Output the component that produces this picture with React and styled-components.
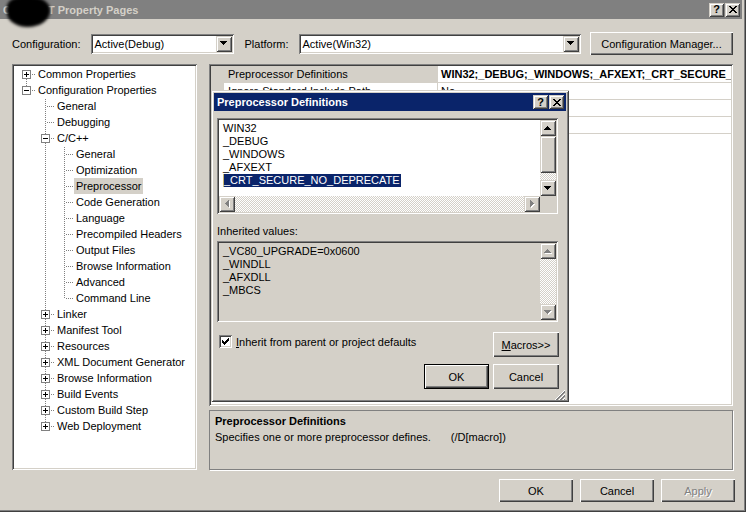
import React from 'react';
import styled, { createGlobalStyle, css } from 'styled-components';

const FACE = '#d4d0c8';
const SHADOW = '#808080';
const DARK = '#404040';
const NAVY = '#0a246a';

const GlobalStyle = createGlobalStyle`
  html, body { margin: 0; padding: 0; background: ${FACE}; }
  body {
    font-family: "Liberation Sans", Arial, sans-serif;
    font-size: 11px;
    color: #000;
  }
  * { box-sizing: border-box; }
`;

const raised = css`
  box-shadow: inset 1px 1px 0 #fff, inset -1px -1px 0 ${DARK}, inset -2px -2px 0 ${SHADOW};
`;

const scrollRaised = css`
  box-shadow: inset 1px 1px 0 ${FACE}, inset -1px -1px 0 ${DARK}, inset 2px 2px 0 #fff, inset -2px -2px 0 ${SHADOW};
`;

const sunken = css`
  box-shadow: inset 1px 1px 0 ${SHADOW}, inset -1px -1px 0 #fff, inset 2px 2px 0 ${DARK}, inset -2px -2px 0 ${FACE};
  padding: 2px;
`;

const dither = css`
  background: repeating-conic-gradient(#fff 0 25%, ${FACE} 0 50%) 0 0 / 2px 2px;
`;

const Window = styled.div`
  width: 746px;
  height: 512px;
  background: ${FACE};
  display: flex;
  flex-direction: column;
  padding: 0 4px 4px 0;
  box-shadow: inset -1px -1px 0 ${DARK}, inset -2px -2px 0 ${SHADOW};
  overflow: hidden;
  position: relative;
`;

const TitleBar = styled.div`
  position: relative;
  height: ${p => (p.$small ? 18 : 19)}px;
  flex: none;
  background: ${p => (p.$active ? NAVY : SHADOW)};
  color: ${p => (p.$active ? '#fff' : FACE)};
  display: flex;
  align-items: center;
  justify-content: space-between;
  padding: 0 2px 0 3px;
  font-weight: bold;
  white-space: nowrap;
`;

const TitleText = styled.span`
  display: flex;
  align-items: center;
`;

const Hidden = styled.span`
  display: inline-block;
  width: 37px;
`;

const Redaction = styled.span`
  position: absolute;
  left: 7px;
  top: -3px;
  width: 43px;
  height: 30px;
  background: #000;
  border-radius: 35% 45% 55% 50%;
  filter: blur(1.5px);
  z-index: 5;
`;

const CaptionButtons = styled.div`
  display: flex;
  gap: 1px;
`;

const CapBtn = styled.div`
  width: 15px;
  height: 14px;
  background: ${FACE};
  ${scrollRaised};
  display: flex;
  align-items: center;
  justify-content: center;
  color: #000;
  font-weight: bold;
  font-size: 11px;
  line-height: 1;
`;

const Content = styled.div`
  flex: 1;
  min-width: 0;
  display: flex;
  flex-direction: column;
  padding: 13px 9px 0 12px;
`;

const ConfigRow = styled.div`
  display: flex;
  align-items: center;
  height: 23px;
  flex: none;
`;

const FieldLabel = styled.span`
  margin: 0 ${p => p.$right}px 0 ${p => p.$left || 0}px;
  white-space: nowrap;
`;

const Combo = styled.div`
  width: ${p => p.$w}px;
  height: 20px;
  flex: none;
  background: #fff;
  ${sunken};
  display: flex;
  align-items: center;
  justify-content: space-between;
`;

const ComboText = styled.span`
  padding-left: 2px;
  white-space: nowrap;
`;

const ArrowBtn = styled.div`
  width: 16px;
  height: ${p => p.$h || 16}px;
  flex: none;
  background: ${FACE};
  ${scrollRaised};
  display: flex;
  align-items: center;
  justify-content: center;
`;

const PushButton = styled.div`
  width: ${p => p.$w}px;
  height: ${p => p.$h || 23}px;
  flex: none;
  background: ${FACE};
  ${raised};
  border: ${p => (p.$default ? '1px solid #000' : 'none')};
  display: flex;
  align-items: center;
  justify-content: center;
  white-space: nowrap;
  margin-left: ${p => (p.$auto ? 'auto' : '0')};
  color: ${p => (p.$disabled ? SHADOW : '#000')};
  text-shadow: ${p => (p.$disabled ? '1px 1px 0 #fff' : 'none')};
`;

const Main = styled.div`
  display: flex;
  gap: 12px;
  margin-top: 9px;
  height: 406px;
  flex: none;
`;

const TreePanel = styled.div`
  width: 185px;
  flex: none;
  overflow: hidden;
  background: #fff;
  ${sunken};
  padding: 2px 0 0 5px;
`;

const TreeRow = styled.div`
  display: flex;
  align-items: center;
  height: 16px;
  white-space: nowrap;
`;

const TreeLabel = styled.span`
  padding: 0 2px;
  line-height: 16px;
  height: 16px;
  background: ${p => (p.$selected ? FACE : 'transparent')};
`;

const RightPane = styled.div`
  flex: 1;
  min-width: 0;
  display: flex;
  flex-direction: column;
  gap: 4px;
`;

const Grid = styled.div`
  position: relative;
  height: 342px;
  flex: none;
  background: #fff;
  ${sunken};
`;

const GridRow = styled.div`
  display: flex;
  height: 17px;
  border-bottom: 1px solid ${FACE};
`;

const Gutter = styled.div`
  width: 13px;
  flex: none;
  background: ${FACE};
`;

const NameCell = styled.div`
  width: 214px;
  flex: none;
  padding-left: 4px;
  line-height: 16px;
  white-space: nowrap;
  overflow: hidden;
  background: ${p => (p.$selected ? FACE : '#fff')};
  border-right: 1px solid ${FACE};
`;

const ValueCell = styled.div`
  flex: 1;
  min-width: 0;
  padding-left: 3px;
  line-height: 16px;
  white-space: nowrap;
  overflow: hidden;
  font-weight: ${p => (p.$bold ? 'bold' : 'normal')};
`;

const Description = styled.div`
  flex: 1;
  border: 1px solid ${SHADOW};
  box-shadow: 1px 1px 0 #fff;
  padding: 2px 5px;
  line-height: 16px;
`;

const DescTitle = styled.div`
  font-weight: bold;
`;

const Switch = styled.span`
  margin-left: 20px;
`;

const BottomRow = styled.div`
  display: flex;
  justify-content: flex-end;
  gap: 7px;
  margin-top: 9px;
  margin-right: -2px;
`;

/* ---------- dialog ---------- */

const Dialog = styled.div`
  position: absolute;
  left: 2px;
  top: 26px;
  width: 358px;
  height: 312px;
  background: ${FACE};
  padding: 3px;
  box-shadow: inset 1px 1px 0 ${FACE}, inset -1px -1px 0 ${DARK}, inset 2px 2px 0 #fff, inset -2px -2px 0 ${SHADOW};
  display: flex;
  flex-direction: column;
  z-index: 2;
`;

const DialogBody = styled.div`
  flex: 1;
  display: flex;
  flex-direction: column;
  padding: 7px 8px 0 3px;
`;

const ListBox = styled.div`
  height: ${p => p.$h}px;
  flex: none;
  ${sunken};
  background: ${p => (p.$disabled ? FACE : '#fff')};
  display: grid;
  grid-template-columns: 1fr 16px;
  grid-template-rows: ${p => (p.$hscroll ? '1fr 16px' : '1fr')};
  margin-top: ${p => p.$mt || 0}px;
`;

const ListItems = styled.div`
  padding: 2px 0 0 4px;
  overflow: hidden;
`;

const ListItem = styled.div`
  height: 13px;
  line-height: 13px;
  white-space: nowrap;
  ${p =>
    p.$selected &&
    css`
      display: inline-block;
      background: ${NAVY};
      color: #fff;
      border-left: 1px solid #c9b46e;
      padding-right: 1px;
    `}
`;

const VScroll = styled.div`
  display: flex;
  flex-direction: column;
  ${dither};
`;

const Track = styled.div`
  flex: 1;
`;

const Thumb = styled.div`
  height: ${p => p.$h}px;
  flex: none;
  background: ${FACE};
  ${scrollRaised};
`;

const HScroll = styled.div`
  display: flex;
  ${dither};
`;

const Corner = styled.div`
  background: ${FACE};
`;

const SectionLabel = styled.div`
  margin-top: 11px;
  line-height: 13px;
  height: 13px;
`;

const OptionsRow = styled.div`
  display: flex;
  justify-content: space-between;
  margin-top: 10px;
  margin-right: -1px;
`;

const CheckWrap = styled.label`
  display: flex;
  align-items: center;
  gap: 4px;
  margin: 3px 0 0 2px;
  height: 13px;
  align-self: flex-start;
`;

const CheckBox = styled.span`
  width: 13px;
  height: 13px;
  background: #fff;
  ${sunken};
  display: flex;
  align-items: center;
  justify-content: center;
`;

const ActionRow = styled.div`
  display: flex;
  justify-content: flex-end;
  gap: 4px;
  margin-top: 7px;
  margin-right: -1px;
`;

const GripRow = styled.div`
  flex: 1;
  display: flex;
  justify-content: flex-end;
  align-items: flex-end;
  margin-right: -8px;
`;

const Key = styled.span`
  text-decoration: underline;
`;

/* ---------- drawings ---------- */

const Arrow = ({ dir, disabled }) => {
  const rows = [[3, 1], [2, 3], [1, 5], [0, 7]];
  const vertical = dir === 'up' || dir === 'down';
  const pix = rows.map(([o, l], i) => {
    const r = dir === 'up' || dir === 'left' ? i : 3 - i;
    return vertical ? { x: o, y: r, w: l, h: 1 } : { x: r, y: o, w: 1, h: l };
  });
  const w = vertical ? 8 : 5;
  const h = vertical ? 5 : 8;
  return (
    <svg width={w} height={h} shapeRendering="crispEdges">
      {disabled &&
        pix.map((p, i) => <rect key={'s' + i} x={p.x + 1} y={p.y + 1} width={p.w} height={p.h} fill="#fff" />)}
      {pix.map((p, i) => (
        <rect key={i} x={p.x} y={p.y} width={p.w} height={p.h} fill={disabled ? SHADOW : '#000'} />
      ))}
    </svg>
  );
};

const CloseGlyph = () => (
  <svg width="8" height="7" shapeRendering="crispEdges">
    {[0, 1, 2, 3, 4, 5, 6].map(i => (
      <g key={i}>
        <rect x={i} y={i} width="2" height="1" fill="#000" />
        <rect x={6 - i} y={i} width="2" height="1" fill="#000" />
      </g>
    ))}
  </svg>
);

const CheckMark = () => {
  const tops = [2, 3, 4, 3, 2, 1, 0];
  return (
    <svg width="7" height="7" shapeRendering="crispEdges">
      {tops.map((t, i) => <rect key={i} x={i} y={t} width="1" height="3" fill="#000" />)}
    </svg>
  );
};

const Grip = () => (
  <svg width="12" height="12" shapeRendering="crispEdges">
    {[0, 4, 8].map(o => (
      <g key={o}>
        <line x1={11} y1={o + 1} x2={o + 1} y2={11} stroke="#fff" strokeWidth="1" />
        <line x1={11} y1={o + 2} x2={o + 2} y2={11} stroke={SHADOW} strokeWidth="1" />
        <line x1={11} y1={o + 3} x2={o + 3} y2={11} stroke={SHADOW} strokeWidth="1" />
      </g>
    ))}
  </svg>
);

const dots = (x1, y1, x2, y2) => {
  const out = [];
  if (x1 === x2) {
    for (let y = y1; y <= y2; y += 2) out.push(<rect key={`v${x1}-${y}`} x={x1} y={y} width="1" height="1" />);
  } else {
    for (let x = x1; x <= x2; x += 2) out.push(<rect key={`h${x}-${y1}`} x={x} y={y1} width="1" height="1" />);
  }
  return out;
};

const Guide = ({ line }) => (
  <svg width="19" height="16" shapeRendering="crispEdges" style={{ flex: 'none' }}>
    <g fill={SHADOW}>{line && dots(9, 1, 9, 15)}</g>
  </svg>
);

const Connector = ({ up, down, expander }) => (
  <svg width="19" height="16" shapeRendering="crispEdges" style={{ flex: 'none' }}>
    <g fill={SHADOW}>
      {up && dots(9, 1, 9, expander ? 3 : 7)}
      {down && dots(9, expander ? 13 : 9, 9, 15)}
      {dots(expander ? 15 : 11, 8, 17, 8)}
    </g>
    {expander && (
      <g>
        <rect x="5" y="4" width="8" height="8" fill="#fff" stroke={SHADOW} strokeWidth="1" transform="translate(0.5 0.5)" />
        <rect x="7" y="8" width="5" height="1" fill="#000" />
        {expander === 'plus' && <rect x="9" y="6" width="1" height="5" fill="#000" />}
      </g>
    )}
  </svg>
);

/* ---------- data ---------- */

const leaf = label => ({ label });
const closed = label => ({ label, children: [] });

const tree = [
  closed('Common Properties'),
  {
    label: 'Configuration Properties',
    open: true,
    children: [
      leaf('General'),
      leaf('Debugging'),
      {
        label: 'C/C++',
        open: true,
        children: [
          leaf('General'),
          leaf('Optimization'),
          { label: 'Preprocessor', selected: true },
          leaf('Code Generation'),
          leaf('Language'),
          leaf('Precompiled Headers'),
          leaf('Output Files'),
          leaf('Browse Information'),
          leaf('Advanced'),
          leaf('Command Line'),
        ],
      },
      closed('Linker'),
      closed('Manifest Tool'),
      closed('Resources'),
      closed('XML Document Generator'),
      closed('Browse Information'),
      closed('Build Events'),
      closed('Custom Build Step'),
      closed('Web Deployment'),
    ],
  },
];

function flatten(nodes, guides = [], out = []) {
  nodes.forEach((n, i) => {
    const last = i === nodes.length - 1;
    out.push({
      label: n.label,
      guides,
      up: !(guides.length === 0 && i === 0),
      down: !last,
      expander: n.children ? (n.open ? 'minus' : 'plus') : null,
      selected: n.selected,
    });
    if (n.open) flatten(n.children, [...guides, !last], out);
  });
  return out;
}

const rows = flatten(tree);

const properties = [
  { name: 'Preprocessor Definitions', value: 'WIN32;_DEBUG;_WINDOWS;_AFXEXT;_CRT_SECURE_NO_DEPRECATE', selected: true },
  { name: 'Ignore Standard Include Path', value: 'No' },
  { name: 'Generate Preprocessed File', value: 'No' },
  { name: 'Keep Comments', value: 'No' },
];

const definitions = ['WIN32', '_DEBUG', '_WINDOWS', '_AFXEXT', '_CRT_SECURE_NO_DEPRECATE'];
const inherited = ['_VC80_UPGRADE=0x0600', '_WINDLL', '_AFXDLL', '_MBCS'];

/* ---------- app ---------- */

export default function App() {
  return (
    <>
      <GlobalStyle />
      <Window>
        <TitleBar>
          <TitleText>
            C<Hidden />T Property Pages
          </TitleText>
          <Redaction />
          <CaptionButtons>
            <CapBtn>?</CapBtn>
            <CapBtn><CloseGlyph /></CapBtn>
          </CaptionButtons>
        </TitleBar>

        <Content>
          <ConfigRow>
            <FieldLabel $right={10}>Configuration:</FieldLabel>
            <Combo $w={143}>
              <ComboText>Active(Debug)</ComboText>
              <ArrowBtn><Arrow dir="down" /></ArrowBtn>
            </Combo>
            <FieldLabel $left={11} $right={10}>Platform:</FieldLabel>
            <Combo $w={282}>
              <ComboText>Active(Win32)</ComboText>
              <ArrowBtn><Arrow dir="down" /></ArrowBtn>
            </Combo>
            <PushButton $w={143} $auto>Configuration Manager...</PushButton>
          </ConfigRow>

          <Main>
            <TreePanel>
              {rows.map((r, i) => (
                <TreeRow key={i}>
                  {r.guides.map((g, j) => <Guide key={j} line={g} />)}
                  <Connector up={r.up} down={r.down} expander={r.expander} />
                  <TreeLabel $selected={r.selected}>{r.label}</TreeLabel>
                </TreeRow>
              ))}
            </TreePanel>

            <RightPane>
              <Grid>
                {properties.map(p => (
                  <GridRow key={p.name}>
                    <Gutter />
                    <NameCell $selected={p.selected}>{p.name}</NameCell>
                    <ValueCell $bold={p.selected}>{p.value}</ValueCell>
                  </GridRow>
                ))}

                <Dialog>
                  <TitleBar $active $small>
                    <TitleText>Preprocessor Definitions</TitleText>
                    <CaptionButtons>
                      <CapBtn>?</CapBtn>
                      <CapBtn><CloseGlyph /></CapBtn>
                    </CaptionButtons>
                  </TitleBar>
                  <DialogBody>
                    <ListBox $h={96} $hscroll>
                      <ListItems>
                        {definitions.map((d, i) => (
                          <div key={d}>
                            <ListItem $selected={i === definitions.length - 1}>{d}</ListItem>
                          </div>
                        ))}
                      </ListItems>
                      <VScroll>
                        <ArrowBtn><Arrow dir="up" /></ArrowBtn>
                        <Thumb $h={37} />
                        <Track />
                        <ArrowBtn><Arrow dir="down" /></ArrowBtn>
                      </VScroll>
                      <HScroll>
                        <ArrowBtn><Arrow dir="left" disabled /></ArrowBtn>
                        <Track />
                        <ArrowBtn><Arrow dir="right" disabled /></ArrowBtn>
                      </HScroll>
                      <Corner />
                    </ListBox>

                    <SectionLabel>Inherited values:</SectionLabel>
                    <ListBox $h={81} $mt={3} $disabled>
                      <ListItems>
                        {inherited.map(d => <ListItem key={d}>{d}</ListItem>)}
                      </ListItems>
                      <VScroll>
                        <ArrowBtn><Arrow dir="up" disabled /></ArrowBtn>
                        <Track />
                        <ArrowBtn><Arrow dir="down" disabled /></ArrowBtn>
                      </VScroll>
                    </ListBox>

                    <OptionsRow>
                      <CheckWrap>
                        <CheckBox><CheckMark /></CheckBox>
                        <span><Key>I</Key>nherit from parent or project defaults</span>
                      </CheckWrap>
                      <PushButton $w={66} $h={25}><Key>M</Key>acros&gt;&gt;</PushButton>
                    </OptionsRow>
                    <ActionRow>
                      <PushButton $w={65} $h={25} $default>OK</PushButton>
                      <PushButton $w={66} $h={25}>Cancel</PushButton>
                    </ActionRow>
                    <GripRow><Grip /></GripRow>
                  </DialogBody>
                </Dialog>
              </Grid>

              <Description>
                <DescTitle>Preprocessor Definitions</DescTitle>
                <div>
                  Specifies one or more preprocessor defines.<Switch>(/D[macro])</Switch>
                </div>
              </Description>
            </RightPane>
          </Main>

          <BottomRow>
            <PushButton $w={74}>OK</PushButton>
            <PushButton $w={74}>Cancel</PushButton>
            <PushButton $w={74} $disabled>Apply</PushButton>
          </BottomRow>
        </Content>
      </Window>
    </>
  );
}
